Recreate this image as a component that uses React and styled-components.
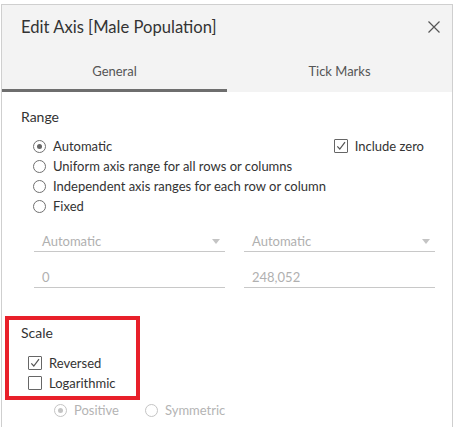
import React from "react";
import styled, { createGlobalStyle } from "styled-components";

const Global = createGlobalStyle`
  html, body { margin: 0; padding: 0; background: #ffffff; }
  body { font-family: Lato, "Open Sans", sans-serif; color: #333; }
`;

const Page = styled.div`
  width: 454px;
  height: 427px;
  overflow: hidden;
  padding: 4px 0 0 1px;
  box-sizing: border-box;
`;

const Dialog = styled.div`
  width: 452px;
  height: 430px;
  box-sizing: border-box;
  border: 1px solid #cfcfcf;
  border-bottom: none;
  background: #fff;
  display: flex;
  flex-direction: column;
`;

const Header = styled.div`
  background: #f3f3f3;
  display: flex;
  flex-direction: column;
`;

const TitleRow = styled.div`
  height: 47px;
  display: flex;
  align-items: flex-start;
  justify-content: space-between;
  padding: 12px 12px 0 19px;
  box-sizing: border-box;
`;

const Title = styled.div`
  font-size: 16.6px;
  line-height: 20px;
  color: #333;
  font-weight: 400;
`;

const Close = styled.svg`
  width: 12px;
  height: 12px;
  margin-top: 4px;
`;

const Tabs = styled.div`
  display: flex;
  height: 40px;
`;

const Tab = styled.div`
  flex: 1;
  display: flex;
  align-items: center;
  justify-content: center;
  font-size: 13px;
  color: #555;
  box-sizing: border-box;
  border-bottom: 3px solid ${(p) => (p.$active ? "#6e6e6e" : "transparent")};
`;

const Body = styled.div`
  padding: 16px 20px 0 19px;
  display: flex;
  flex-direction: column;
`;

const SectionLabel = styled.div`
  font-size: 14px;
  line-height: 18px;
  color: #333;
`;

const OptionsRow = styled.div`
  display: flex;
  justify-content: space-between;
  margin-top: 10px;
  padding-left: 12px;
`;

const OptionList = styled.div`
  display: flex;
  flex-direction: column;
`;

const Option = styled.label`
  display: flex;
  align-items: center;
  height: 20px;
  font-size: 13px;
  color: ${(p) => (p.$disabled ? "#b4b4b4" : "#333")};
  gap: 7px;
`;

const RadioCircle = styled.span`
  width: 13px;
  height: 13px;
  box-sizing: border-box;
  border-radius: 50%;
  border: 1px solid ${(p) => (p.$disabled ? "#c4c4c4" : "#707070")};
  display: flex;
  align-items: center;
  justify-content: center;
  flex-shrink: 0;
  &::after {
    content: "";
    width: 5px;
    height: 5px;
    border-radius: 50%;
    background: ${(p) => (p.$disabled ? "#c4c4c4" : "#666")};
    display: ${(p) => (p.$checked ? "block" : "none")};
  }
`;

const Box = styled.span`
  width: 14px;
  height: 14px;
  box-sizing: border-box;
  border: 1px solid #666;
  border-radius: 1px;
  display: flex;
  align-items: center;
  justify-content: center;
  flex-shrink: 0;
  background: #fff;
`;

const IncludeZero = styled.div`
  padding-right: 8px;
`;

const Fields = styled.div`
  display: grid;
  grid-template-columns: 191px 191px;
  column-gap: 19px;
  row-gap: 15px;
  margin: 15px 0 0 13px;
`;

const Field = styled.div`
  height: 21px;
  box-sizing: border-box;
  border-bottom: 1px solid #c8c8c8;
  display: flex;
  align-items: center;
  justify-content: space-between;
  padding: 0 5px 0 8px;
  font-size: 13px;
  color: #b0b0b0;
`;

const Arrow = styled.span`
  width: 0;
  height: 0;
  border-left: 4px solid transparent;
  border-right: 4px solid transparent;
  border-top: 5px solid #c4c4c4;
`;

const ScaleBox = styled.div`
  margin: 28px 0 0 -16px;
  width: 135px;
  box-sizing: border-box;
  border: 4px solid #e8202a;
  padding: 4px 0 3px 12px;
  display: flex;
  flex-direction: column;
`;

const ScaleList = styled.div`
  display: flex;
  flex-direction: column;
  margin-top: 11px;
  padding-left: 7px;
`;

const SubRow = styled.div`
  display: flex;
  gap: 26px;
  padding-left: 33px;
`;

const Check = () => (
  <svg width="12" height="12" viewBox="0 0 12 12">
    <path d="M2.3 6.3 L4.8 9 L10 2.2" fill="none" stroke="#555" strokeWidth="1.2" />
  </svg>
);

export default function App() {
  return (
    <>
      <Global />
      <Page>
        <Dialog>
          <Header>
            <TitleRow>
              <Title>Edit Axis [Male Population]</Title>
              <Close viewBox="0 0 12 12">
                <path d="M0.5 0.5 L11.5 11.5 M11.5 0.5 L0.5 11.5" stroke="#555" strokeWidth="1.2" />
              </Close>
            </TitleRow>
            <Tabs>
              <Tab $active>General</Tab>
              <Tab>Tick Marks</Tab>
            </Tabs>
          </Header>
          <Body>
            <SectionLabel>Range</SectionLabel>
            <OptionsRow>
              <OptionList>
                <Option><RadioCircle $checked />Automatic</Option>
                <Option><RadioCircle />Uniform axis range for all rows or columns</Option>
                <Option><RadioCircle />Independent axis ranges for each row or column</Option>
                <Option><RadioCircle />Fixed</Option>
              </OptionList>
              <IncludeZero>
                <Option><Box><Check /></Box>Include zero</Option>
              </IncludeZero>
            </OptionsRow>
            <Fields>
              <Field>Automatic<Arrow /></Field>
              <Field>Automatic<Arrow /></Field>
              <Field>0</Field>
              <Field>248,052</Field>
            </Fields>
            <ScaleBox>
              <SectionLabel>Scale</SectionLabel>
              <ScaleList>
                <Option><Box><Check /></Box>Reversed</Option>
                <Option><Box />Logarithmic</Option>
              </ScaleList>
            </ScaleBox>
            <SubRow>
              <Option $disabled><RadioCircle $checked $disabled />Positive</Option>
              <Option $disabled><RadioCircle $disabled />Symmetric</Option>
            </SubRow>
          </Body>
        </Dialog>
      </Page>
    </>
  );
}
